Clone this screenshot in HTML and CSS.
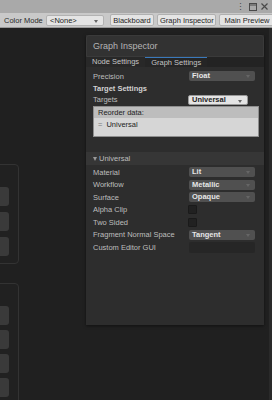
FILE: index.html
```html
<!DOCTYPE html>
<html lang="en">
<head>
    <meta charset="UTF-8">
    <title>Shader Graph</title>
    <link rel="stylesheet" href="styles.css">
</head>
<body>
    <div class="titlebar">
        <span class="tb-icon">&#8942;</span>
        <svg class="tb-icon" width="8" height="8" viewBox="0 0 8 8"><rect x="0.5" y="0.5" width="7" height="7" fill="none" stroke="#4a4a4a"/><line x1="0" y1="2" x2="8" y2="2" stroke="#4a4a4a"/></svg>
        <svg class="tb-icon" width="7" height="7" viewBox="0 0 7 7"><path d="M0.5 0.5 L6.5 6.5 M6.5 0.5 L0.5 6.5" stroke="#4a4a4a" stroke-width="1.2"/></svg>
    </div>

    <div class="toolbar">
        <span class="tool-label">Color Mode</span>
        <div class="tool-select">&lt;None&gt;</div>
        <button class="tool-btn btn-blackboard">Blackboard</button>
        <button class="tool-btn btn-inspector">Graph Inspector</button>
        <button class="tool-btn btn-preview">Main Preview</button>
    </div>

    <div class="main">
        <div class="canvas">
            <div class="node node-a">
                <div class="port"></div>
                <div class="port"></div>
                <div class="port"></div>
            </div>
            <div class="node node-b">
                <div class="port"></div>
                <div class="port"></div>
                <div class="port"></div>
                <div class="port"></div>
            </div>
        </div>

        <div class="inspector">
            <div class="insp-title">Graph Inspector</div>
            <div class="tabs">
                <div class="tab">Node Settings</div>
                <div class="tab active">Graph Settings</div>
            </div>
            <div class="insp-body">
                <div class="row">
                    <span class="label">Precision</span>
                    <div class="select">Float</div>
                </div>
                <div class="heading">Target Settings</div>
                <div class="row">
                    <span class="label">Targets</span>
                    <div class="select light">Universal</div>
                </div>
                <div class="reorder">
                    <div class="reorder-head">Reorder data:</div>
                    <div class="reorder-item"><span class="handle">=</span>Universal</div>
                </div>

                <div class="section">
                    <span class="fold"></span>Universal
                </div>
                <div class="props">
                    <div class="row">
                        <span class="label">Material</span>
                        <div class="select">Lit</div>
                    </div>
                    <div class="row">
                        <span class="label">Workflow</span>
                        <div class="select">Metallic</div>
                    </div>
                    <div class="row">
                        <span class="label">Surface</span>
                        <div class="select">Opaque</div>
                    </div>
                    <div class="row">
                        <span class="label">Alpha Clip</span>
                        <div class="check"></div>
                    </div>
                    <div class="row">
                        <span class="label">Two Sided</span>
                        <div class="check"></div>
                    </div>
                    <div class="row">
                        <span class="label">Fragment Normal Space</span>
                        <div class="select">Tangent</div>
                    </div>
                    <div class="row">
                        <span class="label">Custom Editor GUI</span>
                        <div class="field"></div>
                    </div>
                </div>
            </div>
        </div>

        <div class="scrollbar"></div>
    </div>
</body>
</html>
```

FILE: styles.css
```css
* {
    margin: 0;
    padding: 0;
    box-sizing: border-box;
}

body {
    width: 272px;
    height: 400px;
    overflow: hidden;
    background: #202020;
    font-family: 'Liberation Sans', Arial, sans-serif;
    font-size: 7.5px;
}

/* window title strip */
.titlebar {
    height: 13px;
    background: #a9a9a9;
    display: flex;
    justify-content: flex-end;
    align-items: center;
    gap: 4px;
    padding-right: 4px;
}

.tb-icon {
    color: #4a4a4a;
    font-size: 9px;
    line-height: 8px;
}

/* toolbar */
.toolbar {
    height: 15px;
    background: #c9c9c9;
    border-bottom: 1px solid #999;
    display: flex;
    align-items: center;
    padding-left: 4px;
    white-space: nowrap;
}

.tool-label {
    flex: none;
    color: #2a2a2a;
    width: 42px;
}

.tool-select {
    flex: none;
    position: relative;
    width: 58px;
    height: 11px;
    line-height: 10px;
    padding-left: 3px;
    background: #e4e4e4;
    border: 1px solid #b2b2b2;
    border-radius: 2px;
    color: #222;
}

.tool-select::after,
.select::after {
    content: '';
    position: absolute;
    right: 5px;
    top: 4px;
    border-left: 2.5px solid transparent;
    border-right: 2.5px solid transparent;
    border-top: 3px solid #666;
}

.tool-btn {
    flex: none;
    height: 12px;
    font-family: inherit;
    font-size: 7.5px;
    color: #1e1e1e;
    background: #e4e4e4;
    border: 1px solid #b0b0b0;
    border-radius: 2px;
    padding: 0 2px;
    white-space: nowrap;
}

.btn-blackboard {
    width: 44px;
    margin-left: 6px;
}

.btn-inspector {
    width: 59px;
    margin-left: 3px;
}

.btn-preview {
    width: 56px;
    margin-left: 3px;
}

/* main area */
.main {
    display: flex;
    height: 372px;
}

.canvas {
    flex: none;
    width: 86px;
    overflow: hidden;
}

.node {
    width: 60px;
    margin-left: -41px;
    border: 1px solid #333;
    border-radius: 4px;
    background: #212121;
    display: flex;
    flex-direction: column;
    align-items: flex-end;
    padding-right: 9px;
}

.node-a {
    margin-top: 136px;
    height: 100px;
    padding-top: 22px;
    gap: 6px;
}

.node-b {
    margin-top: 19px;
    height: 130px;
    padding-top: 22px;
    gap: 5px;
}

.port {
    width: 20px;
    height: 19px;
    background: #3a3a3a;
    border-radius: 3px;
}

/* inspector */
.inspector {
    flex: none;
    width: 178px;
    height: 290px;
    margin-top: 7px;
    background: #2d2d2d;
    box-shadow: 0 1px 3px rgba(0, 0, 0, 0.5);
    display: flex;
    flex-direction: column;
}

.insp-title {
    height: 22px;
    line-height: 21px;
    padding-left: 6px;
    background: #323232;
    border: 1px solid #3a3a3a;
    border-radius: 3px 3px 0 0;
    color: #b4b4b4;
    font-size: 9px;
}

.tabs {
    height: 10px;
    display: flex;
    background: #232323;
}

.tab {
    padding: 0 6px;
    line-height: 10px;
    color: #c4c4c4;
    background: #282828;
}

.tab.active {
    background: #252525;
    border-top: 1px solid #3a79bb;
    line-height: 9px;
}

.insp-body {
    padding: 3px 5px 0 7px;
}

.row {
    height: 12.5px;
    display: flex;
    align-items: center;
    justify-content: space-between;
    padding-right: 4px;
}

.label {
    color: #bdbdbd;
}

.select {
    position: relative;
    width: 66px;
    height: 10px;
    line-height: 10px;
    padding-left: 3px;
    background: #505050;
    border-radius: 2px;
    color: #e6e6e6;
    font-weight: bold;
}

.select.light {
    width: 60px;
    margin-right: 7px;
    background: #e4e4e4;
    color: #222;
    border: 1px solid #999;
    line-height: 8px;
}

.heading {
    height: 11px;
    line-height: 11px;
    color: #d2d2d2;
    font-weight: bold;
}

.reorder {
    border: 1px solid #8e8e8e;
    width: 166px;
}

.reorder-head {
    height: 11px;
    line-height: 11px;
    padding-left: 4px;
    background: #bdbdbd;
    color: #222;
}

.reorder-item {
    height: 18px;
    line-height: 14px;
    padding-left: 4px;
    background: #d6d6d6;
    color: #222;
}

.handle {
    color: #777;
    margin-right: 4px;
}

.section {
    margin: 15px -5px 0 -7px;
    height: 13px;
    line-height: 13px;
    padding-left: 7px;
    background: #363636;
    color: #bdbdbd;
}

.fold {
    display: inline-block;
    margin-right: 2px;
    border-left: 2.5px solid transparent;
    border-right: 2.5px solid transparent;
    border-top: 4px solid #9a9a9a;
    vertical-align: 0;
}

.props {
    padding-top: 1px;
}

.check {
    width: 9px;
    height: 9px;
    margin-right: 58px;
    background: #212121;
    border: 1px solid #1a1a1a;
    border-radius: 1px;
}

.field {
    width: 66px;
    height: 11px;
    background: #262626;
    border-radius: 2px;
}

.scrollbar {
    margin-left: 5px;
    width: 3px;
    background: #2a2a2a;
}
```
